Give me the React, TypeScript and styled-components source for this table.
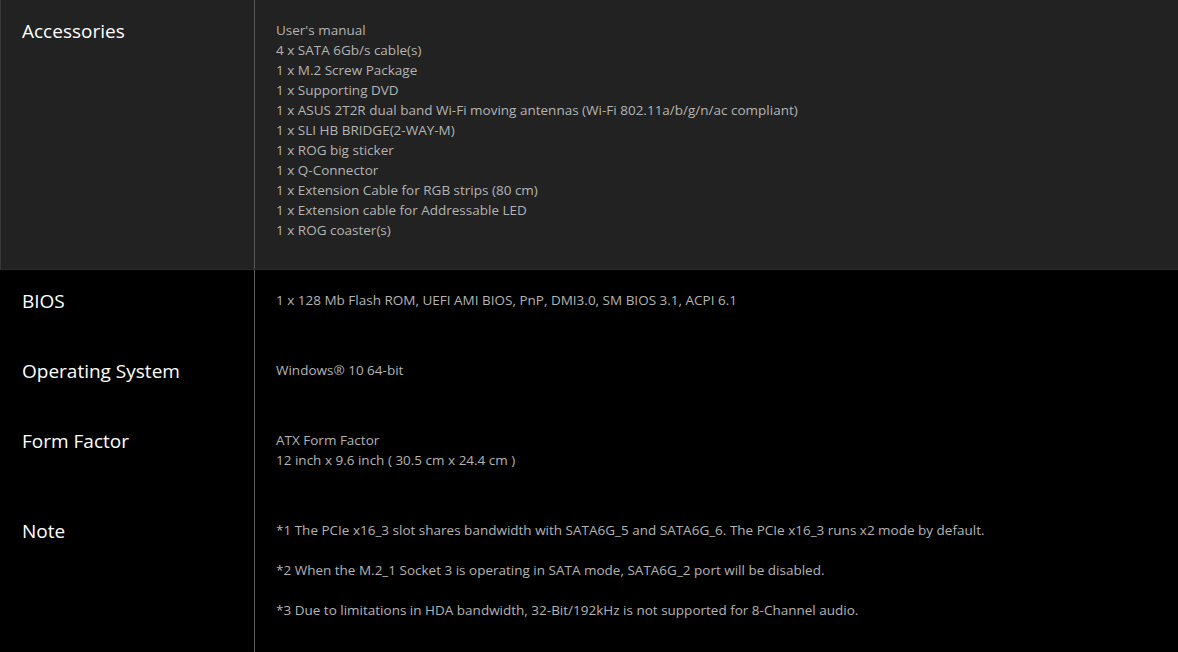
import styled, { createGlobalStyle } from "styled-components";

const GlobalStyle = createGlobalStyle`
  html, body {
    margin: 0;
    padding: 0;
    background: #000;
  }
  body {
    font-family: "Open Sans", "Noto Sans", "Liberation Sans", sans-serif;
  }
`;

type Spec = {
  title: string;
  lines: string[];
  notes?: boolean;
  shaded?: boolean;
};

const specs: Spec[] = [
  {
    title: "Accessories",
    shaded: true,
    lines: [
      "User's manual",
      "4 x SATA 6Gb/s cable(s)",
      "1 x M.2 Screw Package",
      "1 x Supporting DVD",
      "1 x ASUS 2T2R dual band Wi-Fi moving antennas (Wi-Fi 802.11a/b/g/n/ac compliant)",
      "1 x SLI HB BRIDGE(2-WAY-M)",
      "1 x ROG big sticker",
      "1 x Q-Connector",
      "1 x Extension Cable for RGB strips (80 cm)",
      "1 x Extension cable for Addressable LED",
      "1 x ROG coaster(s)",
    ],
  },
  {
    title: "BIOS",
    lines: ["1 x 128 Mb Flash ROM, UEFI AMI BIOS, PnP, DMI3.0, SM BIOS 3.1, ACPI 6.1"],
  },
  {
    title: "Operating System",
    lines: ["Windows® 10 64-bit"],
  },
  {
    title: "Form Factor",
    lines: ["ATX Form Factor", "12 inch x 9.6 inch ( 30.5 cm x 24.4 cm )"],
  },
  {
    title: "Note",
    notes: true,
    lines: [
      "*1 The PCIe x16_3 slot shares bandwidth with SATA6G_5 and SATA6G_6. The PCIe x16_3 runs x2 mode by default.",
      "*2 When the M.2_1 Socket 3 is operating in SATA mode, SATA6G_2 port will be disabled.",
      "*3 Due to limitations in HDA bandwidth, 32-Bit/192kHz is not supported for 8-Channel audio.",
    ],
  },
];

const Table = styled.div`
  width: 1178px;
  display: flex;
  flex-direction: column;
`;

const Row = styled.div<{ $shaded?: boolean }>`
  display: grid;
  grid-template-columns: 255px 1fr;
  background: ${(p) => (p.$shaded ? "#222222" : "#000000")};
  ${(p) =>
    p.$shaded &&
    `
    box-shadow: inset 1px 0 0 #3a3a3a;
    border-bottom: 1px solid #2c2c2c;
  `}
`;

const Label = styled.div`
  border-right: 1px solid #5a5a5a;
  padding: 17px 0 0 22px;
  color: #ffffff;
  font-size: 19px;
  line-height: 28px;
`;

const Value = styled.div<{ $notes?: boolean; $shaded?: boolean }>`
  padding: 20px 22px ${(p) => (p.$shaded ? "29px" : p.$notes ? "32px" : "30px")} 21px;
  color: #b4b4b4;
  font-size: 13.5px;
  line-height: 20px;
  display: flex;
  flex-direction: column;
  gap: ${(p) => (p.$notes ? "20px" : "0")};
`;

export default function App() {
  return (
    <>
      <GlobalStyle />
      <Table>
        {specs.map((s) => (
          <Row key={s.title} $shaded={s.shaded}>
            <Label>{s.title}</Label>
            <Value $notes={s.notes} $shaded={s.shaded}>
              {s.lines.map((l) => (
                <div key={l}>{l}</div>
              ))}
            </Value>
          </Row>
        ))}
      </Table>
    </>
  );
}
